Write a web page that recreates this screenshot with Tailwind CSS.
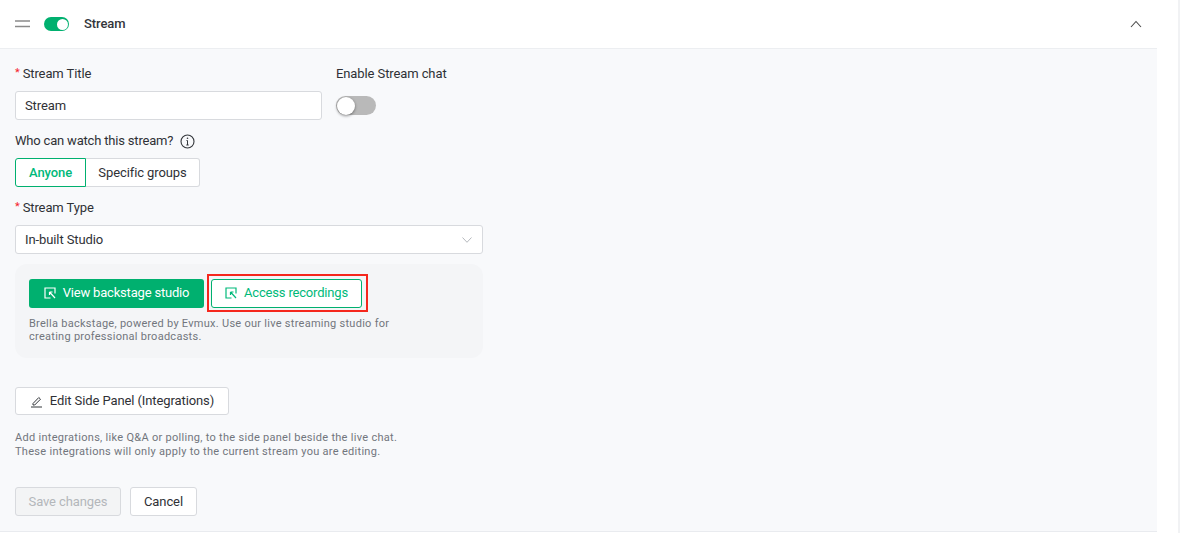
<!DOCTYPE html>
<html>
<head>
<meta charset="utf-8">
<script src="https://cdn.jsdelivr.net/npm/@tailwindcss/browser@4"></script>
</head>
<body class="bg-white font-['Roboto',sans-serif] text-[13px] tracking-[-0.1px] text-[#2f3136] overflow-hidden">
<div class="h-[533px] w-[1180px] flex">
  <div class="w-[1157px] h-[532px] flex flex-col border-b border-[#e9ebef]">
    <header class="h-[49px] shrink-0 flex items-center bg-white border-b border-[#eceef1] pl-[15px] pr-[15px]">
      <svg class="w-[15px] h-[8px]" viewBox="0 0 15 8"><path d="M0 1h15M0 6.500h15" stroke="#8a8a8a" stroke-width="1.600"/></svg>
      <span class="ml-[14px] w-[25px] h-[14px] rounded-full bg-[#00b06f] flex items-center justify-end pr-[1.500px]"><span class="w-[11px] h-[11px] rounded-full bg-white"></span></span>
      <span class="ml-[15px] font-medium text-[#33363b]">Stream</span>
      <svg class="ml-auto w-[12px] h-[8px]" viewBox="0 0 12 8" fill="none"><path d="M1 7l5-5.500L11 7" stroke="#4a4a4a" stroke-width="1.100"/></svg>
    </header>
    <main class="flex-1 bg-[#f8f9fb] pl-[15px] flex flex-col">
      <div class="flex mt-[15px]">
        <div class="w-[307px]">
          <div class="h-[20px] leading-[20px]"><span class="text-[#f5222d] text-[11px] mr-[3px] relative -top-[2px]">*</span>Stream Title</div>
          <div class="mt-[7px] h-[29px] bg-white border border-[#d8dade] rounded-[3px] pl-[9px] flex items-center">Stream</div>
        </div>
        <div class="ml-[14px]">
          <div class="h-[20px] leading-[20px]">Enable Stream chat</div>
          <div class="mt-[12px] w-[40px] h-[19px] rounded-full bg-[#b9b9b9] relative">
            <span class="absolute left-[1px] top-[0.500px] w-[18px] h-[18px] rounded-full bg-white shadow-[0_1px_3px_rgba(0,0,0,0.45)]"></span>
          </div>
        </div>
      </div>
      <div class="mt-[11px] h-[20px] flex items-center tracking-[-0.19px]">
        Who can watch this stream?
        <svg class="ml-[7px] w-[15px] h-[15px]" viewBox="0 0 15 15" fill="none"><circle cx="7.500" cy="7.500" r="6.500" stroke="#33363b" stroke-width="1.100"/><path d="M7.500 6.500v4.500M6.300 11h2.400M6.500 6.500h1" stroke="#33363b" stroke-width="1"/><circle cx="7.500" cy="4.300" r="0.800" fill="#33363b"/></svg>
      </div>
      <div class="mt-[7px] flex h-[29px] w-[185px]">
        <div class="w-[71px] bg-white border border-[#00b06f] rounded-l-[3px] text-[#00b97a] font-medium flex items-center justify-center">Anyone</div>
        <div class="flex-1 bg-white border border-l-0 border-[#d8dade] rounded-r-[3px] flex items-center justify-center">Specific groups</div>
      </div>
      <div class="mt-[11px] h-[20px] leading-[20px]"><span class="text-[#f5222d] text-[11px] mr-[3px] relative -top-[2px]">*</span>Stream Type</div>
      <div class="mt-[7px] w-[468px] h-[29px] bg-white border border-[#d8dade] rounded-[3px] pl-[9px] pr-[10px] flex items-center justify-between">
        In-built Studio
        <svg class="w-[10px] h-[6px]" viewBox="0 0 10 6" fill="none"><path d="M0.500 0.500L5 5.300 9.500 0.500" stroke="#b5b8bd" stroke-width="1"/></svg>
      </div>
      <section class="mt-[10px] w-[468px] h-[94px] bg-[#f4f5f7] rounded-[12px] pl-[14px] pt-[10px]">
        <div class="flex items-center">
          <button class="w-[175px] h-[29px] bg-[#00b06f] rounded-[3px] text-white tracking-[-0.19px] flex items-center justify-center gap-[7px]">
            <svg class="w-[12px] h-[12px]" viewBox="0 0 12 12" fill="none" stroke="#fff" stroke-width="1.200"><path d="M11 6.500V1H1v10h5.500M5.500 5l5.500 6M5.500 5h3M5.500 5v3"/></svg>
            View backstage studio
          </button>
          <div class="ml-[3px] w-[161px] h-[38px] border-2 border-[#f5271d] flex items-center justify-center">
            <button class="mr-[2px] w-[151px] h-[29px] bg-white border border-[#00b06f] rounded-[3px] text-[#00b97a] tracking-[-0.18px] flex items-center justify-center gap-[7px]">
              <svg class="w-[12px] h-[12px]" viewBox="0 0 12 12" fill="none" stroke="#00b97a" stroke-width="1.200"><path d="M11 6.500V1H1v10h5.500M5.500 5l5.500 6M5.500 5h3M5.500 5v3"/></svg>
              Access recordings
            </button>
          </div>
        </div>
        <p class="mt-[5px] text-[11px] leading-[13px] tracking-[0.27px] text-[#72767d]">Brella backstage, powered by Evmux. Use our live streaming studio for<br>creating professional broadcasts.</p>
      </section>
      <button class="mt-[29px] w-[214px] h-[28px] bg-white border border-[#d8dade] rounded-[3px] flex items-center justify-center gap-[7px]">
        <svg class="w-[13px] h-[13px]" viewBox="0 0 13 13" fill="none" stroke="#33363b" stroke-width="1"><path d="M3 8.500L8.800 2.500 10.500 4.200 4.700 10H3zM1 12h11"/></svg>
        Edit Side Panel (Integrations)
      </button>
      <p class="mt-[16px] text-[11px] leading-[14px] tracking-[0.29px] text-[#72767d]">Add integrations, like Q&amp;A or polling, to the side panel beside the live chat.<br>These integrations will only apply to the current stream you are editing.</p>
      <div class="mt-[28px] flex gap-[9px]">
        <button class="w-[106px] h-[29px] bg-[#f3f4f5] border border-[#d8dade] rounded-[3px] text-[#b4b7bb]">Save changes</button>
        <button class="w-[67px] h-[29px] bg-white border border-[#d8dade] rounded-[3px]">Cancel</button>
      </div>
    </main>
  </div>
  <div class="ml-auto w-[2px] h-full bg-[#f1f2f4]"></div>
</div>
</body>
</html>
